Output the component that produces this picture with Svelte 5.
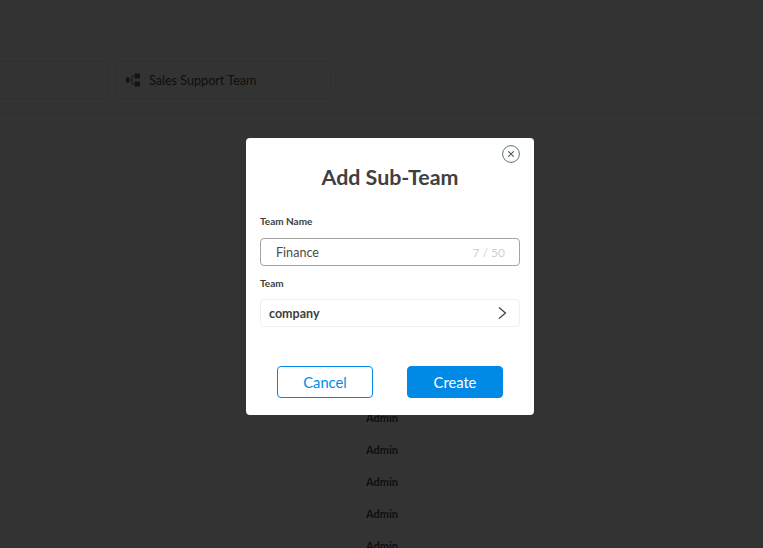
<script>
  const adminRows = ["Admin", "Admin", "Admin", "Admin", "Admin"];
</script>

<div class="page">
  <div class="team-strip">
    <div class="team-card team-card--cut"></div>
    <div class="team-card">
      <svg class="team-icon" width="16" height="16" viewBox="0 0 16 16" aria-hidden="true">
        <path d="M1 5.500h3.500v5H1zM4.500 7.400h2v1.200h-2z" fill="currentColor" />
        <path d="M6.500 3.500h1.100v9H6.500zM7.600 3.500h2v1.100h-2zM7.600 11.400h2v1.100h-2z" fill="currentColor" opacity="0.8" />
        <path d="M9.500 1.500h5.500v5H9.500zM9.500 9.500h5.500v5H9.500z" fill="currentColor" />
      </svg>
      <span>Sales Support Team</span>
    </div>
  </div>

  <div class="rows">
    {#each adminRows as role}
      <div class="row">{role}</div>
    {/each}
  </div>
</div>

<div class="overlay">
  <div class="modal">
    <button class="close" aria-label="Close">
      <svg width="18" height="18" viewBox="0 0 18 18" aria-hidden="true">
        <circle cx="9" cy="9" r="8.400" fill="none" stroke="#5f737c" stroke-width="1" />
        <path d="M6.300 6.300l5.400 5.400M11.700 6.300l-5.400 5.400" stroke="#4a5358" stroke-width="1.100" fill="none" />
      </svg>
    </button>

    <h2>Add Sub-Team</h2>

    <label class="field-label" for="team-name">Team Name</label>
    <div class="input-box">
      <input id="team-name" value="Finance" />
      <span class="count">7 / 50</span>
    </div>

    <div class="field-label field-label--team">Team</div>
    <div class="select-box">
      <span>company</span>
      <svg width="12" height="14" viewBox="0 0 12 14" aria-hidden="true">
        <path d="M3 1.500L9.500 7 3 12.500" fill="none" stroke="#3d3d3d" stroke-width="1.200" />
      </svg>
    </div>

    <div class="actions">
      <button class="btn btn--ghost">Cancel</button>
      <button class="btn btn--solid">Create</button>
    </div>
  </div>
</div>

<style>
  :global(body) {
    margin: 0;
    background: #fff;
    font-family: Lato, "Liberation Sans", sans-serif;
  }

  .page {
    height: 548px;
    overflow: hidden;
    box-sizing: border-box;
    padding-top: 61px;
  }

  .team-strip {
    display: flex;
    gap: 8px;
    height: 53px;
    box-sizing: border-box;
    margin-left: -100px;
    border-bottom: 1px solid #e8e8e8;
  }

  .team-card {
    display: flex;
    align-items: center;
    gap: 8px;
    width: 215px;
    height: 38px;
    box-sizing: border-box;
    padding-left: 8px;
    border: 1px solid #eaeaea;
    border-radius: 4px;
    font-size: 12.600px;
    color: #4a4a4a;
  }

  .team-card--cut {
    width: 208px;
  }

  .team-icon {
    color: #666;
  }

  .rows {
    display: flex;
    flex-direction: column;
    align-items: center;
    gap: 18px;
    padding: 297px 0 0;
    width: 764px;
  }

  .row {
    height: 14px;
    line-height: 14px;
    font-size: 11px;
    font-weight: 700;
    color: #4a4a4a;
  }

  .overlay {
    position: fixed;
    inset: 0;
    background: rgba(0, 0, 0, 0.8);
  }

  .modal {
    position: relative;
    box-sizing: border-box;
    width: 288px;
    height: 277px;
    margin: 138px 0 0 246px;
    padding: 26px 14px 0;
    background: #fff;
    border-radius: 4px;
    color: #3d3d3d;
  }

  .close {
    position: absolute;
    top: 7px;
    right: 14px;
    width: 18px;
    height: 18px;
    padding: 0;
    border: 0;
    background: none;
  }

  h2 {
    margin: 0;
    height: 27px;
    line-height: 27px;
    font-size: 21.400px;
    font-weight: 700;
    text-align: center;
    color: #404040;
  }

  .field-label {
    display: block;
    margin-top: 23px;
    height: 14px;
    line-height: 14px;
    font-size: 10px;
    font-weight: 700;
    color: #404040;
  }

  .field-label--team {
    margin-top: 10px;
  }

  .input-box {
    display: flex;
    align-items: center;
    height: 28px;
    margin-top: 10px;
    box-sizing: border-box;
    padding: 0 14px 0 15px;
    border: 1px solid #a3a3a3;
    border-radius: 4px;
  }

  input {
    flex: 1;
    min-width: 0;
    padding: 0;
    border: 0;
    outline: 0;
    background: none;
    font: inherit;
    font-size: 12.600px;
    color: #4a4a4a;
  }

  .count {
    font-size: 12px;
    color: #d0d0d0;
  }

  .select-box {
    display: flex;
    align-items: center;
    justify-content: space-between;
    height: 28px;
    margin-top: 9px;
    box-sizing: border-box;
    padding: 0 11px 0 8px;
    border: 1px solid #eef0f1;
    border-radius: 4px;
    font-size: 12.500px;
    font-weight: 700;
  }

  .actions {
    display: flex;
    justify-content: center;
    gap: 34px;
    margin-top: 39px;
  }

  .btn {
    width: 96px;
    height: 32px;
    padding: 0;
    border-radius: 4px;
    font: inherit;
    font-size: 14.700px;
  }

  .btn--ghost {
    border: 1px solid #008ae6;
    background: #fff;
    color: #008ae6;
  }

  .btn--solid {
    border: 1px solid #008ae6;
    background: #008ae6;
    color: #fff;
  }
</style>
